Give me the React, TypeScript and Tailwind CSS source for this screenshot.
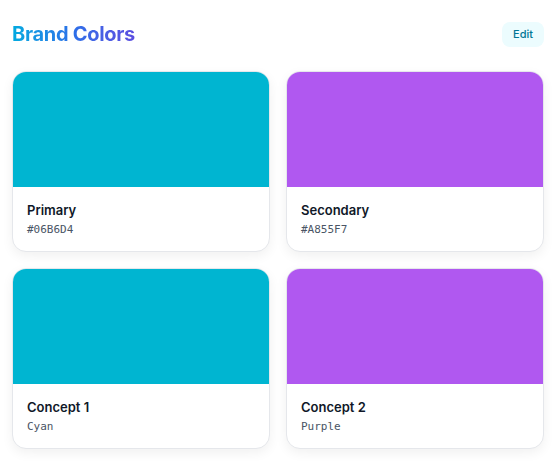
import React from 'react'

type Swatch = {
    name: string
    value: string
    color: string
}

const swatches: Swatch[] = [
    { name: 'Primary', value: '#06B6D4', color: 'bg-[#00b5d1]' },
    { name: 'Secondary', value: '#A855F7', color: 'bg-[#b058f0]' },
    { name: 'Concept 1', value: 'Cyan', color: 'bg-[#00b5d1]' },
    { name: 'Concept 2', value: 'Purple', color: 'bg-[#b058f0]' },
]

const SwatchCard = ({ swatch }: { swatch: Swatch }) => (
    <div className="rounded-[14px] overflow-hidden bg-white border border-gray-200 shadow-[0_4px_12px_rgba(0,0,0,0.06)]">
        <div className={`h-[115px] ${swatch.color}`} />
        <div className="px-[14px] pt-[14px] pb-[13px]">
            <p className="text-[13px] font-semibold text-gray-900 leading-[18px]">{swatch.name}</p>
            <p className="mt-[3px] text-[11px] leading-[16px] text-gray-600 font-['DejaVu_Sans_Mono',monospace]">{swatch.value}</p>
        </div>
    </div>
)

const App = () => {
    return (
        <div className="min-h-screen bg-white px-3 pt-[21px] font-['Inter',sans-serif]">
            <div className="flex items-center justify-between">
                <h1 className="text-[20px] font-bold tracking-[-0.3px] leading-[26px] bg-gradient-to-r from-[#00aae0] via-[#2b6fe8] to-[#5a4de0] bg-clip-text text-transparent">
                    Brand Colors
                </h1>
                <button className="h-[25px] px-[11px] rounded-lg bg-[#ecfcfe] text-[11px] font-medium text-cyan-700">
                    Edit
                </button>
            </div>
            <div className="mt-[24px] grid grid-cols-2 gap-4">
                {swatches.map((s) => (
                    <SwatchCard key={s.name} swatch={s} />
                ))}
            </div>
        </div>
    )
}

export default App
